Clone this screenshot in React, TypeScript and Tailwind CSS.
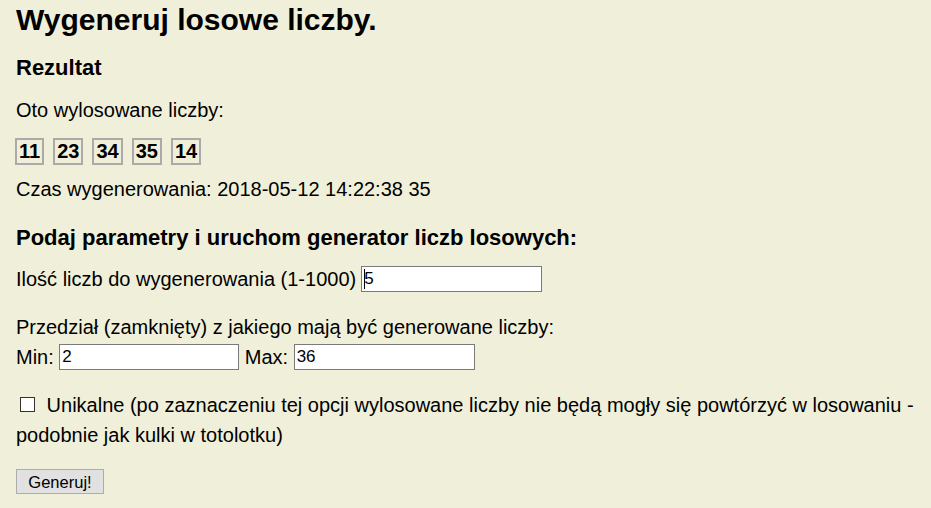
import React from "react";

export default function App() {
  const nums = ["11", "23", "34", "35", "14"];
  return (
    <div className="min-h-[508px] w-full bg-[#f0f0da] px-4 pt-[2px] text-black font-['Liberation_Sans',Arial,sans-serif]">
      <h1 className="text-[30px] leading-[36px] font-bold">Wygeneruj losowe liczby.</h1>
      <h3 className="mt-[17px] text-[22px] leading-[26px] font-bold">Rezultat</h3>
      <p className="mt-[17px] text-[20px] leading-[24px]">Oto wylosowane liczby:</p>
      <div className="mt-[16px] ml-[-1px] flex gap-[9px]">
        {nums.map((n) => (
          <span
            key={n}
            className="border-2 border-[#aaaaaa] px-[2px] text-[20px] leading-[23px] font-bold"
          >
            {n}
          </span>
        ))}
      </div>
      <p className="mt-[12px] text-[20px] leading-[24px]">Czas wygenerowania: 2018-05-12 14:22:38 35</p>
      <h3 className="mt-[24px] text-[22px] leading-[26px] font-bold">
        Podaj parametry i uruchom generator liczb losowych:
      </h3>
      <div className="mt-[15px] flex h-[26px] items-center gap-[5px]">
        <span className="text-[20px] leading-[24px]">Ilość liczb do wygenerowania (1-1000)</span>
        <div className="relative">
          <input
            readOnly
            value="5"
            className="block h-[26px] w-[181px] border border-[#7a7a7a] bg-white pl-[2px] text-[17px] text-black outline-none font-['Liberation_Sans',Arial,sans-serif]"
          />
          <span className="absolute left-[3px] top-[3px] h-[20px] w-px bg-black" />
        </div>
      </div>
      <p className="mt-[23px] text-[20px] leading-[24px]">
        Przedział (zamknięty) z jakiego mają być generowane liczby:
      </p>
      <div className="mt-[5px] flex h-[26px] items-center gap-[5.5px] text-[20px] leading-[24px]">
        <span>Min:</span>
        <input
          readOnly
          value="2"
          className="block h-[26px] w-[180px] border border-[#7a7a7a] bg-white pl-[2px] text-[17px] text-black outline-none font-['Liberation_Sans',Arial,sans-serif]"
        />
        <span>Max:</span>
        <input
          readOnly
          value="36"
          className="block h-[26px] w-[181px] border border-[#7a7a7a] bg-white pl-[2px] text-[17px] text-black outline-none font-['Liberation_Sans',Arial,sans-serif]"
        />
      </div>
      <p className="mt-[20px] text-[20px] leading-[30px]">
        <span className="ml-[4px] mr-[6px] inline-block h-[15px] w-[15px] border border-[#333333] bg-white" />{" "}
        Unikalne (po zaznaczeniu tej opcji wylosowane liczby nie będą mogły się powtórzyć w losowaniu -
        podobnie jak kulki w totolotku)
      </p>
      <button className="mt-[19px] h-[25px] w-[88px] border border-[#adadad] bg-[#e1e1e1] text-[16.5px] leading-[20px] text-black font-['Liberation_Sans',Arial,sans-serif]">
        Generuj!
      </button>
    </div>
  );
}
